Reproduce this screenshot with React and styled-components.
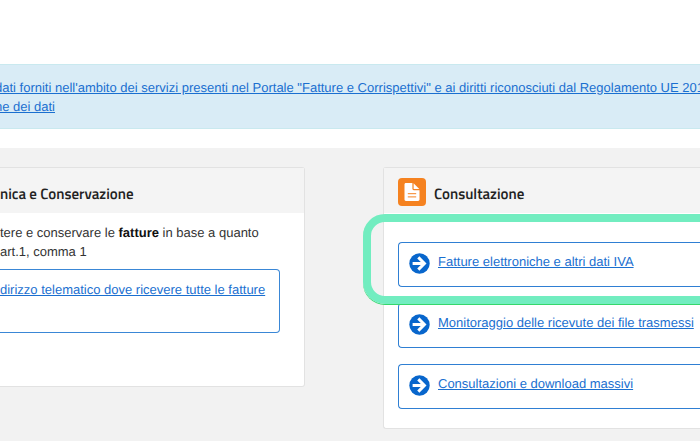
import React from 'react'
import styled, { createGlobalStyle } from 'styled-components'

const GlobalStyle = createGlobalStyle`
  * {
    box-sizing: border-box;
  }

  body {
    margin: 0;
    background: #fff;
    color: #333;
    font-family: 'Liberation Sans', Arial, sans-serif;
    font-size: 13px;
    line-height: 19px;
    text-rendering: geometricPrecision;
  }
`

const Page = styled.div`
  min-height: 100vh;
  display: flex;
  flex-direction: column;
  padding-top: 64px;
  overflow: hidden;
`

const TextLink = styled.a`
  color: #1a6fd0;
  text-decoration: underline;
  white-space: nowrap;
`

const Notice = styled.div`
  margin: 0 -6px 19px;
  padding: 13px 0;
  height: 65px;
  border: 1px solid #c9e9ef;
  background: #d9ecf6;
`

const Content = styled.main`
  flex: 1;
  display: grid;
  grid-template-columns: 305fr 317fr;
  column-gap: 78px;
  align-items: start;
  padding: 19px 0 11px;
  background: #f2f2f2;
`

const Card = styled.section`
  min-width: 0;
  border: 1px solid #e2e2e2;
  border-left-width: ${({ $cut }) => ($cut === 'left' ? 0 : '1px')};
  border-right-width: ${({ $cut }) => ($cut === 'right' ? 0 : '1px')};
  border-radius: ${({ $cut }) => ($cut === 'left' ? '0 3px 3px 0' : '3px 0 0 3px')};
  background: #fff;
`

const CardHeader = styled.header`
  display: flex;
  align-items: center;
  gap: 8px;
  height: 45px;
  padding: ${({ $inset }) => ($inset ? '2px 14px 0' : '2px 0 0')};
  background: #f4f4f4;
`

const CardTitle = styled.h2`
  margin: 0;
  padding-top: 4px;
  color: #222;
  font-family: 'Titillium Web', Roboto, sans-serif;
  font-size: 15px;
  font-weight: 600;
  line-height: 20px;
  white-space: nowrap;
`

const IconTile = styled.span`
  display: flex;
  flex: none;
  align-items: center;
  justify-content: center;
  width: 28px;
  height: 28px;
  border-radius: 4px;
  background: #f58220;
`

const TransmissionBody = styled.div`
  padding: 10px 24px 53px 0;

  p {
    margin: 0 0 8px;
    white-space: nowrap;
  }

  strong {
    color: #111;
  }
`

const TransmissionBox = styled.div`
  height: 64px;
  padding: 10px 0;
  border: 1px solid #3a87d6;
  border-left: 0;
  border-radius: 0 4px 4px 0;
`

const LinkList = styled.ul`
  display: flex;
  flex-direction: column;
  gap: 16px;
  margin: 0;
  padding: 29px 0 19px 14px;
  list-style: none;
`

const LinkItem = styled.li`
  position: relative;
  display: flex;
  gap: 8px;
  height: 45px;
  padding: 9px 0 0 10px;
  border: 1px solid #2f7fd3;
  border-right: 0;
  border-radius: 4px 0 0 4px;

  svg {
    flex: none;
    margin-top: 1px;
  }
`

const Highlight = styled.span`
  position: absolute;
  inset: -29px -40px -18px -36px;
  border: 8px solid #72edc0;
  border-radius: 22px;
  box-shadow: 0 1px 0 #35d76c;
  pointer-events: none;
  z-index: 1;
`

const DocumentIcon = () => (
  <svg width="16" height="18" viewBox="0 0 16 18" aria-hidden="true">
    <path
      fill="#fff"
      d="M1.9 0H8.4v5.8c0 .8.6 1.4 1.4 1.4H15.5v9.4c0 .8-.6 1.4-1.4 1.4H1.9C1.1 18 .5 17.4 .5 16.6V1.4C.5.6 1.1 0 1.9 0z"
    />
    <path fill="#fff" d="M9.6 0.2 15.3 6H9.6z" />
    <path stroke="#f58220" strokeWidth="1" d="M3.8 10.7h8.4M3.8 13.9h8.4" />
  </svg>
)

const ArrowIcon = () => (
  <svg width="21" height="21" viewBox="0 0 21 21" aria-hidden="true">
    <circle cx="10.5" cy="10.5" r="10.2" fill="#0866cc" />
    <path fill="none" stroke="#fff" strokeWidth="3" d="M3.6 10.5h12M9.3 4.4l6.1 6.1-6.1 6.1" />
  </svg>
)

const links = [
  { label: 'Fatture elettroniche e altri dati IVA', highlighted: true },
  { label: 'Monitoraggio delle ricevute dei file trasmessi' },
  { label: 'Consultazioni e download massivi' }
]

const App = () => (
  <>
    <GlobalStyle />
    <Page>
      <Notice>
        <TextLink href="#privacy">
          dati forniti nell'ambito dei servizi presenti nel Portale "Fatture e Corrispettivi" e ai
          diritti riconosciuti dal Regolamento UE 2016/
          <br />
          ne dei dati
        </TextLink>
      </Notice>
      <Content>
        <Card $cut="left">
          <CardHeader>
            <CardTitle>nica e Conservazione</CardTitle>
          </CardHeader>
          <TransmissionBody>
            <p>
              tere e conservare le <strong>fatture</strong> in base a quanto
              <br />
              art.1, comma 1
            </p>
            <TransmissionBox>
              <TextLink href="#indirizzo">dirizzo telematico dove ricevere tutte le fatture</TextLink>
            </TransmissionBox>
          </TransmissionBody>
        </Card>
        <Card $cut="right">
          <CardHeader $inset>
            <IconTile>
              <DocumentIcon />
            </IconTile>
            <CardTitle>Consultazione</CardTitle>
          </CardHeader>
          <LinkList>
            {links.map(({ label, highlighted }) => (
              <LinkItem key={label}>
                <ArrowIcon />
                <TextLink href="#consultazione">{label}</TextLink>
                {highlighted && <Highlight />}
              </LinkItem>
            ))}
          </LinkList>
        </Card>
      </Content>
    </Page>
  </>
)

export default App
